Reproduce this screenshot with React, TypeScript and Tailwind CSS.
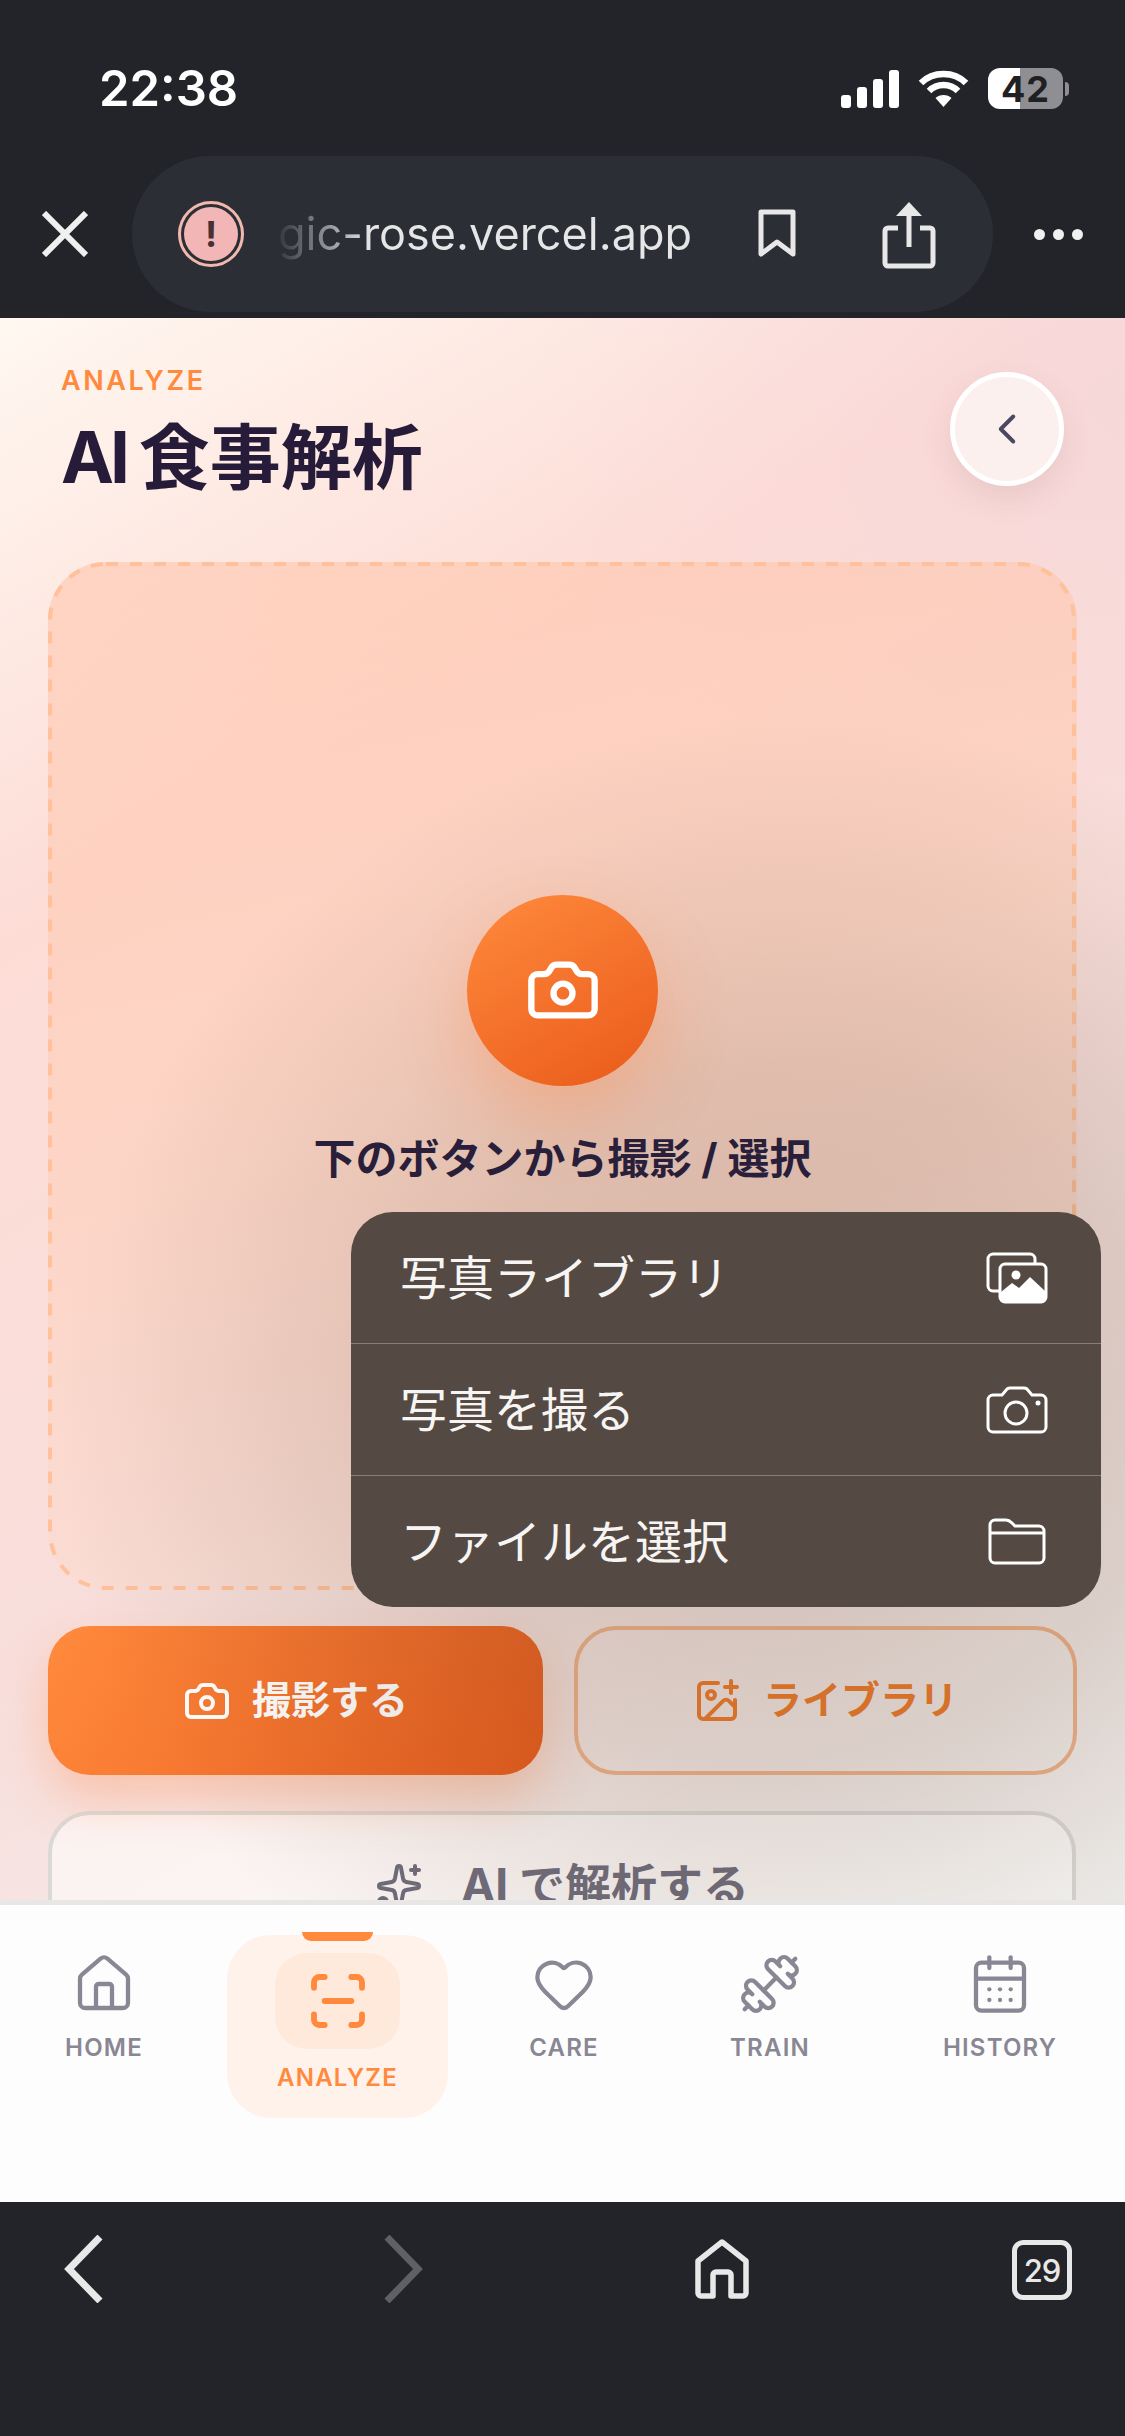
import { Camera, CalendarDays, ChevronLeft, Dumbbell, Heart, House, ImagePlus, ScanLine, Sparkles } from "lucide-react";
import React from "react";

const SANS = "font-['Inter','Noto_Sans_CJK_JP',sans-serif]";

const StatusIcons = () => (
  <div className="mt-[2px] flex items-center">
    {/* signal */}
    <svg width="58" height="38" viewBox="0 0 58 38" fill="#fff">
      <rect x="0" y="25" width="10" height="13" rx="3" />
      <rect x="16" y="17" width="10" height="21" rx="3" />
      <rect x="32" y="9" width="10" height="29" rx="3" />
      <rect x="48" y="0" width="10" height="38" rx="3" />
    </svg>
    {/* wifi */}
    <svg className="ml-[19px]" width="51" height="38" viewBox="0 0 51 38" fill="none" stroke="#fff" strokeWidth="6.5">
      <path d="M3 13C15 1 36 1 48 13" />
      <path d="M11 21c8-8 21-8 29 0" />
      <path d="M25.5 37l-8-9c4-4 12-4 16 0z" fill="#fff" stroke="none" />
    </svg>
    {/* battery */}
    <div className="ml-[19px] flex items-center">
      <div className="flex h-[41px] w-[75px] items-center justify-center rounded-[12px] bg-[linear-gradient(90deg,#fff_0,#fff_43%,#8e8e93_43%,#8e8e93_100%)] text-[36px] leading-none font-bold tracking-[1px] text-[#1f2024]">
        42
      </div>
      <div className="ml-[2px] h-[14px] w-[4px] rounded-r-full bg-[#8e8e93]" />
    </div>
  </div>
);

const NavItem = ({ label, icon, className }: { label: string; icon: React.ReactNode; className: string }) => (
  <div className={`flex flex-col items-center pt-[47px] ${className}`}>
    {icon}
    <span className="mt-[17px] text-[24px] leading-[30px] font-semibold tracking-[1.2px] text-[#8a8794]">{label}</span>
  </div>
);

const PhotosIcon = () => (
  <svg width="62" height="52" viewBox="0 0 62 52" fill="none" stroke="#fff" strokeWidth="3">
    <path d="M13 39H7a5 5 0 0 1-5-5V7a5 5 0 0 1 5-5h37a5 5 0 0 1 5 5v5" />
    <rect x="14" y="12" width="46" height="38" rx="5" />
    <circle cx="30" cy="23" r="4.5" fill="#fff" stroke="none" />
    <path d="M15 40l11-9 7 5 11-11 15 14v6a4 4 0 0 1-4 4H19a4 4 0 0 1-4-4z" fill="#fff" stroke="none" />
  </svg>
);

const MenuCameraIcon = () => (
  <svg width="62" height="48" viewBox="0 0 62 48" fill="none" stroke="#fff" strokeWidth="3">
    <path d="M7 9h9l5-6a5 5 0 0 1 3-1h13a5 5 0 0 1 4 1l5 6h9a5 5 0 0 1 5 5v27a5 5 0 0 1-5 5H7a5 5 0 0 1-5-5V14a5 5 0 0 1 5-5z" />
    <circle cx="30" cy="27" r="11" />
    <circle cx="52" cy="17" r="2.5" fill="#fff" stroke="none" />
  </svg>
);

const FolderIcon = () => (
  <svg width="58" height="47" viewBox="0 0 58 47" fill="none" stroke="#fff" strokeWidth="3">
    <path d="M2 7a5 5 0 0 1 5-5h11c3 0 4 1 6 3l3 3h24a5 5 0 0 1 5 5v27a5 5 0 0 1-5 5H7a5 5 0 0 1-5-5z" />
    <path d="M3 15h52" />
  </svg>
);

const MenuRow = ({ label, icon, border }: { label: string; icon: React.ReactNode; border?: boolean }) => (
  <div className={`flex flex-1 items-center justify-between pr-[53px] pl-[49px] ${border ? "border-b border-[#8b7d75]" : ""}`}>
    <span className="text-[47px] leading-none font-normal text-[#f7f5f3]">{label}</span>
    <div className="flex w-[62px] justify-center">{icon}</div>
  </div>
);

export default function App() {
  return (
    <div className={`flex h-[2436px] w-[1125px] flex-col overflow-hidden bg-[#232429] ${SANS}`}>
      {/* Status bar */}
      <div className="flex h-[156px] shrink-0 items-start justify-between pt-[66px] pr-[56px] pl-[99px]">
        <span className="text-[49px] leading-[46px] font-semibold text-white">22:38</span>
        <StatusIcons />
      </div>

      {/* URL bar */}
      <div className="flex h-[162px] shrink-0 items-start pl-[42px]">
        <div className="flex h-[156px] items-center">
          <svg width="46" height="46" viewBox="0 0 46 46" stroke="#f0f0f0" strokeWidth="6" fill="none">
            <path d="M2 2l42 42M44 2L2 44" />
          </svg>
          <div className="ml-[44px] flex h-[156px] w-[861px] items-center rounded-[78px] bg-[#2c2e36] pl-[46px]">
            <div className="flex h-[66px] w-[66px] items-center justify-center rounded-full border-[3px] border-[#f2b8ae] p-[3px]">
              <div className="flex h-full w-full items-center justify-center rounded-full bg-[#f2b6b6] text-[36px] leading-none font-bold text-[#4a3033]">!</div>
            </div>
            <span className="ml-[34px] w-[420px] bg-[linear-gradient(90deg,rgba(230,230,230,0.05)_0,#e6e6e6_22%)] bg-clip-text text-[45px] leading-[60px] whitespace-nowrap text-transparent">
              gic-rose.vercel.app
            </span>
            <svg className="ml-[60px]" width="38" height="50" viewBox="0 0 38 50" fill="none" stroke="#e8e8e8" strokeWidth="5">
              <path d="M3 3h32v42L19 33 3 45z" strokeLinejoin="round" />
            </svg>
            <svg className="ml-[86px]" width="54" height="70" viewBox="0 0 54 70" fill="none" stroke="#e8e8e8" strokeWidth="5">
              <path d="M16 29H6a3 3 0 0 0-3 3v32a3 3 0 0 0 3 3h42a3 3 0 0 0 3-3V32a3 3 0 0 0-3-3H38" />
              <path d="M27 48V6" />
              <path d="M14 17L27 3l13 14z" fill="#e8e8e8" stroke="none" />
            </svg>
          </div>
          <div className="ml-[41px] flex gap-[8px]">
            <span className="h-[11px] w-[11px] rounded-full bg-[#f0f0f0]" />
            <span className="h-[11px] w-[11px] rounded-full bg-[#f0f0f0]" />
            <span className="h-[11px] w-[11px] rounded-full bg-[#f0f0f0]" />
          </div>
        </div>
      </div>

      {/* Page */}
      <main className="relative min-h-0 flex-1 overflow-hidden bg-[radial-gradient(ellipse_600px_500px_at_1125px_80px,rgba(238,208,222,0.35),rgba(238,208,222,0)),linear-gradient(150deg,#fff8f1_0%,#fddcd6_28%,#f8dedb_60%,#f4f4f3_100%)]">
        <div className="flex items-start justify-between pt-[46px] pr-[61px] pl-[61px]">
          <div className="pt-[2px]">
            <p className="text-[27px] leading-[30px] font-semibold tracking-[2.6px] text-[#ff8a3d]">ANALYZE</p>
            <h1 className="mt-[19px] text-[71px] leading-[84px] font-bold text-[#261b38]">
              <span className="tracking-[-4px]">AI </span>食事解析
            </h1>
          </div>
          <button className="mt-[8px] flex h-[114px] w-[114px] items-center justify-center rounded-full border-[5px] border-white bg-[#fbf0ee] shadow-[0_12px_30px_rgba(120,80,70,0.12)]">
            <ChevronLeft size={50} strokeWidth={1.9} color="#4b4860" />
          </button>
        </div>

        {/* Drop zone */}
        <div className="relative mx-[48px] mt-[63px] flex h-[1028px] flex-col items-center justify-center rounded-[58px] bg-[linear-gradient(170deg,rgba(255,196,170,0.6)_0%,rgba(255,205,180,0.5)_50%,rgba(255,225,210,0.25)_100%)] pb-[69px]">
          <svg className="absolute inset-0" width="1028" height="1028" fill="none">
            <rect x="2" y="2" width="1024" height="1024" rx="56" stroke="#ffc19b" strokeWidth="4" strokeDasharray="12 12" />
          </svg>
          <div className="relative z-10 flex h-[191px] w-[191px] items-center justify-center rounded-full bg-[linear-gradient(150deg,#ff8a3d,#ea5a1a)] shadow-[0_30px_70px_rgba(255,130,60,0.32)]">
            <Camera size={76} strokeWidth={2} color="#fff" />
          </div>
          <p className="relative z-10 mt-[43px] text-[42px] leading-[60px] font-bold text-[#2a1f3a]">下のボタンから撮影 / 選択</p>
        </div>

        {/* Actions */}
        <div className="mx-[48px] mt-[36px] flex gap-[31px]">
          <button className="flex h-[149px] w-[495px] items-center justify-center gap-[21px] rounded-[42px] bg-[linear-gradient(120deg,#ff8a3d,#ea5a1a)] text-[39px] font-bold text-white shadow-[0_24px_50px_rgba(255,120,50,0.3)]">
            <Camera size={48} strokeWidth={2} />
            撮影する
          </button>
          <button className="flex h-[149px] flex-1 items-center justify-center gap-[22px] rounded-[42px] border-[4px] border-[#f1b48c] text-[39px] font-bold text-[#f07a28]">
            <ImagePlus size={48} strokeWidth={2} />
            ライブラリ
          </button>
        </div>
        <button className="mx-[48px] mt-[36px] flex h-[149px] w-[1028px] items-center justify-center gap-[38px] rounded-[42px] border-[4px] border-[#dbd9d6] bg-[rgba(255,255,255,0.55)] text-[46px] font-bold text-[#6e6c7c]">
          <Sparkles size={48} strokeWidth={2} />
          AI で解析する
        </button>

        {/* Dimming around the open menu */}
        <div className="pointer-events-none absolute inset-0 bg-[radial-gradient(ellipse_740px_700px_at_800px_1100px,rgba(100,75,50,0.26)_0%,rgba(100,75,50,0.18)_50%,rgba(100,75,50,0)_100%)]" />

        {/* Context menu */}
        <div className="absolute top-[894px] left-[351px] flex h-[395px] w-[750px] flex-col overflow-hidden rounded-[42px] bg-[#544a43]">
          <MenuRow label="写真ライブラリ" icon={<PhotosIcon />} border />
          <MenuRow label="写真を撮る" icon={<MenuCameraIcon />} border />
          <MenuRow label="ファイルを選択" icon={<FolderIcon />} />
        </div>
      </main>

      {/* Tab bar */}
      <nav className="flex h-[302px] shrink-0 items-start border-t-[5px] border-[#e8e7e5] bg-[#fdfdfd]">
        <NavItem label="HOME" className="w-[208px]" icon={<House size={64} strokeWidth={1.6} color="#8a8794" />} />
        <div className="relative mt-[30px] ml-[19px] flex h-[183px] w-[221px] flex-col items-center rounded-[44px] bg-[#fff2ea]">
          <span className="absolute -top-[3px] left-[75px] h-[9px] w-[71px] rounded-b-[9px] bg-[#ff8a3d]" />
          <div className="mt-[18px] flex h-[96px] w-[125px] items-center justify-center rounded-[32px] bg-[#ffe9db]">
            <ScanLine size={64} strokeWidth={2.2} color="#ff8a3d" />
          </div>
          <span className="mt-[14px] text-[24px] leading-[30px] font-semibold tracking-[1.2px] text-[#ff8a3d]">ANALYZE</span>
        </div>
        <NavItem label="CARE" className="w-[232px]" icon={<Heart size={64} strokeWidth={1.6} color="#8a8794" />} />
        <NavItem label="TRAIN" className="w-[180px]" icon={<Dumbbell size={64} strokeWidth={1.6} color="#8a8794" />} />
        <NavItem label="HISTORY" className="ml-[20px] w-[240px]" icon={<CalendarDays size={64} strokeWidth={1.6} color="#8a8794" />} />
      </nav>

      {/* Browser toolbar */}
      <div className="flex h-[234px] shrink-0 items-start pt-[33px]">
        <svg className="ml-[64px]" width="40" height="68" viewBox="0 0 40 68" fill="none" stroke="#e8e8e8" strokeWidth="7">
          <path d="M36 2L5 34l31 32" />
        </svg>
        <svg className="ml-[279px]" width="40" height="68" viewBox="0 0 40 68" fill="none" stroke="#5f6066" strokeWidth="7">
          <path d="M4 2l31 32L4 66" />
        </svg>
        <svg className="mt-[4px] ml-[272px]" width="54" height="60" viewBox="0 0 54 60" fill="none" stroke="#e8e8e8" strokeWidth="5.5" strokeLinejoin="round">
          <path d="M3 22L27 3l24 19v32a3 3 0 0 1-3 3H36V36a3 3 0 0 0-3-3H21a3 3 0 0 0-3 3v21H6a3 3 0 0 1-3-3z" />
        </svg>
        <div className="mt-[5px] ml-[263px] flex h-[60px] w-[60px] items-center justify-center rounded-[11px] border-[5px] border-[#e8e8e8] text-[31px] leading-none font-medium tracking-[-1px] text-[#e8e8e8]">
          29
        </div>
      </div>
    </div>
  );
}
